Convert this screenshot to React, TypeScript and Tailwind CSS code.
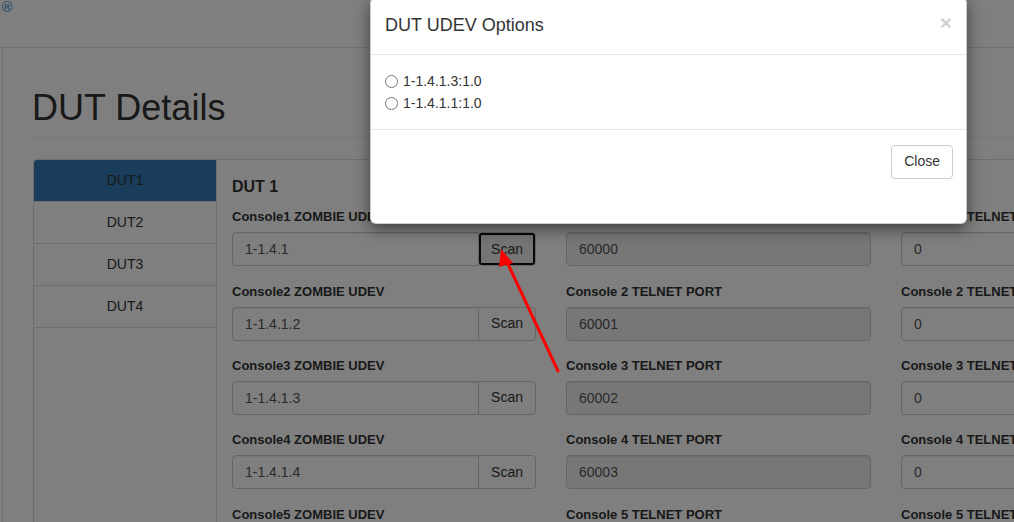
const rows = [
  { n: 1, udev: '1-1.4.1', port: '60000', extra: '0' },
  { n: 2, udev: '1-1.4.1.2', port: '60001', extra: '0' },
  { n: 3, udev: '1-1.4.1.3', port: '60002', extra: '0' },
  { n: 4, udev: '1-1.4.1.4', port: '60003', extra: '0' },
  { n: 5, udev: '1-1.4.1.5', port: '60004', extra: '0' },
]

const tabs = ['DUT1', 'DUT2', 'DUT3', 'DUT4']

const inputCls =
  'block w-full h-[34px] px-[12px] text-[14px] text-[#555] border border-[#ccc] shadow-[inset_0_1px_1px_rgba(0,0,0,0.075)] outline-none'

function Field({ label, children }: { label: string; children: React.ReactNode }) {
  return (
    <div className="mb-[15.33px] min-w-0">
      <label className="block text-[13px] font-bold leading-[20px] mb-[5px] text-[#333] whitespace-nowrap">{label}</label>
      {children}
    </div>
  )
}

export default function App() {
  return (
    <div className="relative w-[1014px] h-[522px] overflow-hidden bg-white text-[#333] font-['Liberation_Sans',Arial,sans-serif]">
      {/* navbar */}
      <div className="h-[48px] border-b border-[#e0e0e0] relative">
        <span className="absolute left-0 top-0 text-[14px] text-[#3a8fd0] leading-none font-['DejaVu_Sans',sans-serif]">®</span>
      </div>

      <div className="ml-[2px] border-l border-[#ddd] pl-[29px] h-[474px]">
        <div className="pt-[40px] pb-[9px] border-b border-[#eee] mb-[21px]">
          <h1 className="text-[36px] font-medium leading-[39.6px] text-[#333]">DUT Details</h1>
        </div>

        <div className="ml-px flex border-t border-l border-[#ddd] rounded-tl-[4px] h-[400px]">
          <div className="w-[183px] shrink-0 border-r border-[#ddd]">
            {tabs.map((t, i) => (
              <div
                key={t}
                className={`h-[42px] flex items-center justify-center text-[14px] text-[#333] border-b border-[#ddd] ${
                  i === 0 ? 'bg-[#337ab7] rounded-tl-[3px] h-[41px]' : 'bg-white'
                }`}
              >
                {t}
              </div>
            ))}
          </div>

          <div className="pl-[15px] pt-[18px] min-w-0">
            <h4 className="text-[16px] font-bold leading-[17.6px] mb-[12px] text-[#333]">DUT 1</h4>
            <div className="grid grid-cols-[304px_305px_305px] gap-x-[30px]">
              {rows.map((r) => (
                <div key={r.n} className="contents">
                  <Field label={`Console${r.n} ZOMBIE UDEV`}>
                    <div className="flex">
                      <input readOnly value={r.udev} className={`${inputCls} rounded-l-[4px] flex-1 min-w-0 bg-white`} />
                      <button
                        className={`h-[34px] px-[12px] -ml-px text-[14px] text-[#333] border border-[#ccc] rounded-r-[4px] shrink-0 ${
                          r.n === 1 ? 'bg-[#ebebeb] outline-2 outline-[#111] outline-offset-[-3px] rounded-[4px]' : 'bg-white'
                        }`}
                      >
                        Scan
                      </button>
                    </div>
                  </Field>
                  <Field label={`Console ${r.n} TELNET PORT`}>
                    <input readOnly value={r.port} className={`${inputCls} rounded-[4px] bg-[#eee]`} />
                  </Field>
                  <Field label={`Console ${r.n} TELNET BAUD RATE`}>
                    <input readOnly value={r.extra} className={`${inputCls} rounded-[4px] bg-white`} />
                  </Field>
                </div>
              ))}
            </div>
          </div>
        </div>
      </div>

      {/* backdrop */}
      <div className="absolute inset-0 bg-black/50" />

      {/* modal */}
      <div className="absolute left-[370px] top-[-3px] w-[597px] bg-white rounded-[6px] border border-black/20 shadow-[0_5px_15px_rgba(0,0,0,0.5)]">
        <div className="flex items-start justify-between pl-[14px] pr-[14px] py-[15px] border-b border-[#e5e5e5]">
          <h4 className="text-[18px] leading-[25.7px] text-[#333]">DUT UDEV Options</h4>
          <button className="text-[21px] font-bold leading-[21px] text-black/20 -mt-[1px]">×</button>
        </div>
        <div className="pt-[16px] pb-[14px] px-[14px]">
          {['1-1.4.1.3:1.0', '1-1.4.1.1:1.0'].map((o) => (
            <label key={o} className="flex items-center h-[22px] text-[14px] text-[#333]">
              <input type="radio" name="udev" className="w-[13px] h-[13px] m-0 mr-[5px]" />
              {o}
            </label>
          ))}
        </div>
        <div className="flex justify-end border-t border-[#e5e5e5] px-[13px] pt-[15px] pb-[44px]">
          <button className="h-[34px] px-[12px] text-[14px] text-[#333] bg-white border border-[#ccc] rounded-[4px]">
            Close
          </button>
        </div>
      </div>

      {/* annotation arrow */}
      <svg className="absolute left-0 top-0 pointer-events-none" width="1014" height="522">
        <line x1="558" y1="371" x2="507" y2="262" stroke="#ff0000" strokeWidth="3" strokeLinecap="round" />
        <polygon points="501,249 513,263 499,267" fill="#ff0000" />
      </svg>
    </div>
  )
}
